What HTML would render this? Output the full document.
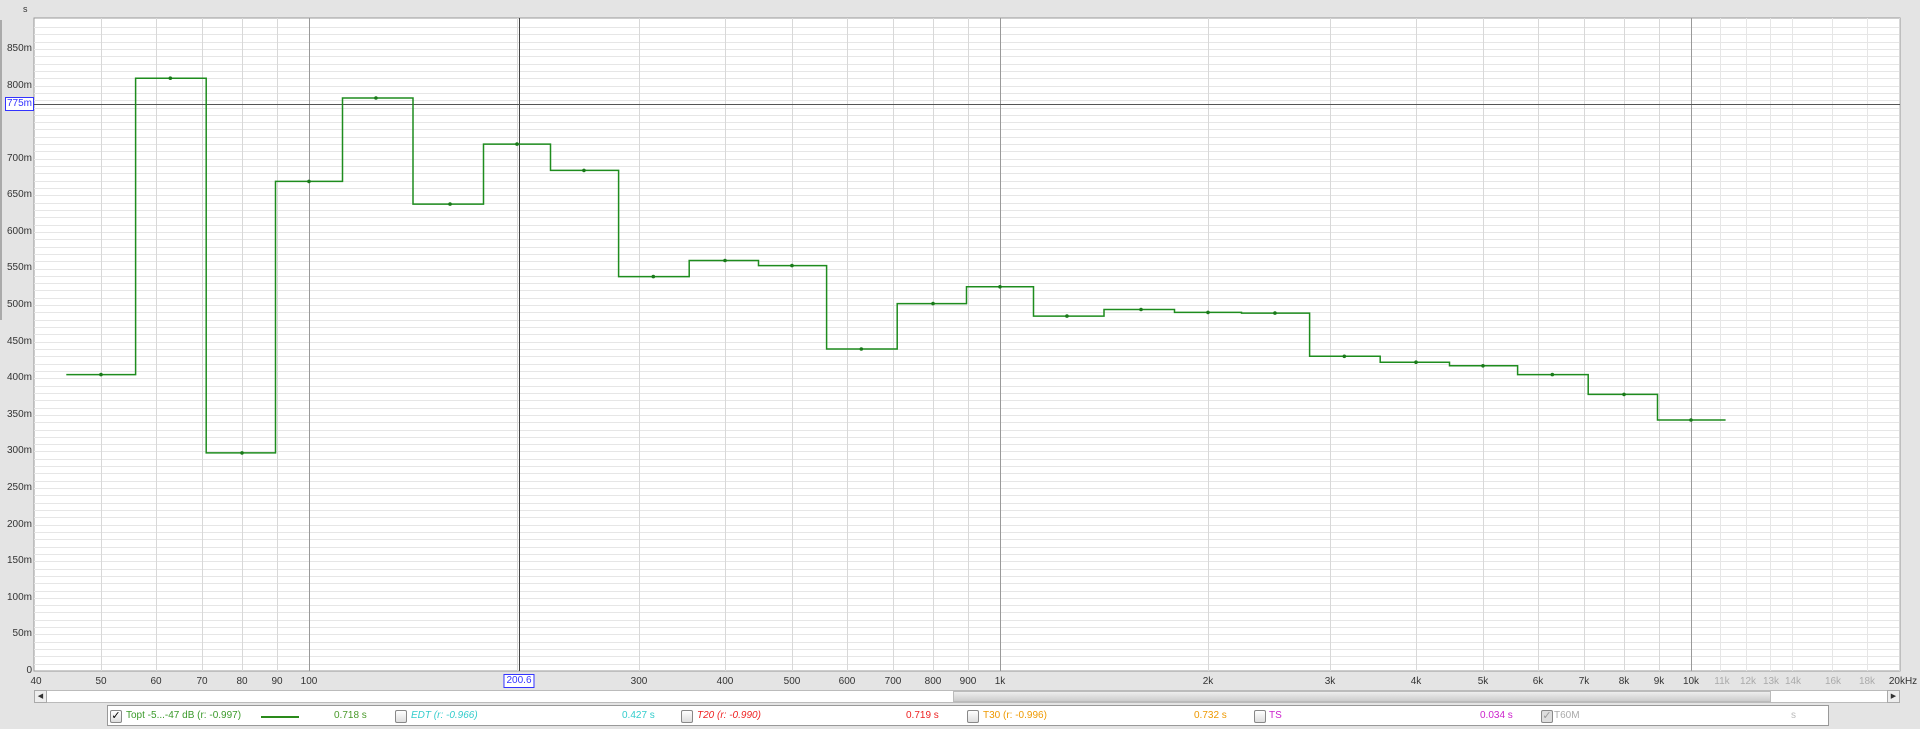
<!DOCTYPE html>
<html><head><meta charset="utf-8"><style>
body{margin:0;width:1920px;height:729px;background:#e4e4e4;font-family:"Liberation Sans",sans-serif;font-size:10px;color:#333;position:relative;overflow:hidden}
.t{position:absolute;white-space:nowrap}
.yl{position:absolute;right:1888px;text-align:right}
.xl{position:absolute;top:676px;transform:translateX(-50%)}
.g{color:#aaa}
.cb{position:absolute;width:10px;height:11px;border:1px solid #888;border-radius:2px;background:linear-gradient(#fff,#ddd);top:710px}
.lg{position:absolute;top:710px;font-size:10px}
</style></head><body>
<div class="t" style="left:23px;top:4px;font-size:9px">s</div>
<div style="position:absolute;left:0;top:20px;width:2px;height:300px;background:#aaa"></div>
<svg id="p" width="1920" height="729" style="position:absolute;left:0;top:0"></svg>
<div class="yl" style="top:43px">850m</div>
<div class="yl" style="top:80px">800m</div>
<div class="yl" style="top:153px">700m</div>
<div class="yl" style="top:189px">650m</div>
<div class="yl" style="top:226px">600m</div>
<div class="yl" style="top:262px">550m</div>
<div class="yl" style="top:299px">500m</div>
<div class="yl" style="top:336px">450m</div>
<div class="yl" style="top:372px">400m</div>
<div class="yl" style="top:409px">350m</div>
<div class="yl" style="top:445px">300m</div>
<div class="yl" style="top:482px">250m</div>
<div class="yl" style="top:519px">200m</div>
<div class="yl" style="top:555px">150m</div>
<div class="yl" style="top:592px">100m</div>
<div class="yl" style="top:628px">50m</div>
<div class="yl" style="top:665px">0</div>
<div class="t" style="left:5px;top:97px;border:1px solid #33f;color:#33f;background:#fff;padding:0 1px;font-size:10px;line-height:12px">775m</div>
<div class="xl" style="left:36px">40</div>
<div class="xl" style="left:101px">50</div>
<div class="xl" style="left:156px">60</div>
<div class="xl" style="left:202px">70</div>
<div class="xl" style="left:242px">80</div>
<div class="xl" style="left:277px">90</div>
<div class="xl" style="left:309px">100</div>
<div class="xl" style="left:519px;top:674px;border:1px solid #33f;color:#33f;background:#fff;padding:0 2px;line-height:12px">200.6</div>
<div class="xl" style="left:639px">300</div>
<div class="xl" style="left:725px">400</div>
<div class="xl" style="left:792px">500</div>
<div class="xl" style="left:847px">600</div>
<div class="xl" style="left:893px">700</div>
<div class="xl" style="left:933px">800</div>
<div class="xl" style="left:968px">900</div>
<div class="xl" style="left:1000px">1k</div>
<div class="xl" style="left:1208px">2k</div>
<div class="xl" style="left:1330px">3k</div>
<div class="xl" style="left:1416px">4k</div>
<div class="xl" style="left:1483px">5k</div>
<div class="xl" style="left:1538px">6k</div>
<div class="xl" style="left:1584px">7k</div>
<div class="xl" style="left:1624px">8k</div>
<div class="xl" style="left:1659px">9k</div>
<div class="xl" style="left:1691px">10k</div>
<div class="xl g" style="left:1722px">11k</div>
<div class="xl g" style="left:1748px">12k</div>
<div class="xl g" style="left:1771px">13k</div>
<div class="xl g" style="left:1793px">14k</div>
<div class="xl g" style="left:1833px">16k</div>
<div class="xl g" style="left:1867px">18k</div>
<div class="xl" style="left:1903px">20kHz</div>
<!-- scrollbar -->
<div style="position:absolute;left:34px;top:690px;width:1866px;height:13px;background:#fff;border:1px solid #bbb;box-sizing:border-box"></div>
<div style="position:absolute;left:34px;top:690px;width:13px;height:13px;border:1px solid #aaa;box-sizing:border-box;background:#eee;font-size:7px;line-height:11px;text-align:center">◀</div>
<div style="position:absolute;left:953px;top:691px;width:818px;height:11px;background:linear-gradient(#eee,#ccc);border:1px solid #bbb;box-sizing:border-box"></div>
<div style="position:absolute;left:1887px;top:690px;width:13px;height:13px;border:1px solid #aaa;box-sizing:border-box;background:#eee;font-size:7px;line-height:11px;text-align:center">▶</div>
<!-- legend -->
<div style="position:absolute;left:107px;top:705px;width:1722px;height:21px;background:#fff;border:1px solid #999;box-sizing:border-box"></div>
<div class="cb" style="left:110px;font-size:11px;line-height:11px;text-align:center;color:#000">✓</div>
<div class="lg" style="left:126px;color:#3a9a2a">Topt -5...-47 dB (r: -0.997)</div>
<div style="position:absolute;left:261px;top:716px;width:38px;height:2px;background:#2a8a1a"></div>
<div class="lg" style="left:334px;color:#4a9a2a">0.718 s</div>
<div class="cb" style="left:395px"></div>
<div class="lg" style="left:411px;color:#3cc;font-style:italic">EDT (r: -0.966)</div>
<div class="lg" style="left:622px;color:#3cc">0.427 s</div>
<div class="cb" style="left:681px"></div>
<div class="lg" style="left:697px;color:#e22;font-style:italic">T20 (r: -0.990)</div>
<div class="lg" style="left:906px;color:#e22">0.719 s</div>
<div class="cb" style="left:967px"></div>
<div class="lg" style="left:983px;color:#e90">T30 (r: -0.996)</div>
<div class="lg" style="left:1194px;color:#e90">0.732 s</div>
<div class="cb" style="left:1254px"></div>
<div class="lg" style="left:1269px;color:#c2c">TS</div>
<div class="lg" style="left:1480px;color:#c2c">0.034 s</div>
<div class="cb" style="left:1541px;background:#ddd;color:#999;font-size:11px;line-height:11px;text-align:center">✓</div>
<div class="lg" style="left:1554px;color:#aaa">T60M</div>
<div class="lg" style="left:1791px;color:#bbb">s</div>
<script>
var s=document.getElementById('p'),h='';
function X(f){return 34+691*Math.log10(f/40)}
function Y(v){return 671-v*0.7318}
h+='<rect x="34" y="18" width="1866" height="653" fill="#fff" stroke="#999"/>';
for(var v=10;v<=880;v+=10){var y=Math.round(Y(v))+0.5;if(y>18)h+='<line x1="34" x2="1900" y1="'+y+'" y2="'+y+'" stroke="#e6e6e6"/>';}
var fs=[];for(var d=10;d<=10000;d*=10)for(var k=1;k<10;k++)fs.push(k*d);
fs.forEach(function(f){if(f>40&&f<=20000){var x=Math.round(X(f))+0.5;var dk=(f==100||f==1000||f==10000);h+='<line x1="'+x+'" x2="'+x+'" y1="18" y2="671" stroke="'+(dk?'#999':'#d8d8d8')+'"/>';}});
[11000,12000,13000,14000,16000,18000].forEach(function(f){var x=Math.round(X(f))+0.5;h+='<line x1="'+x+'" x2="'+x+'" y1="18" y2="671" stroke="#e6e6e6"/>';});
h+='<line x1="519.5" x2="519.5" y1="18" y2="671" stroke="#444"/>';
var yc=Math.round(Y(775))+0.5;
h+='<line x1="34" x2="1900" y1="'+yc+'" y2="'+yc+'" stroke="#555"/>';
var c=[50,63,80,100,125,160,200,250,315,400,500,630,800,1000,1250,1600,2000,2500,3150,4000,5000,6300,8000,10000];
var v=[405,810,298,669,783,638,720,684,539,561,554,440,502,525,485,494,490,489,430,422,417,405,378,343];
var r=Math.pow(2,1/6),p='',dots='';
var ed=[c[0]/r];for(var i=0;i<c.length-1;i++)ed.push(Math.sqrt(c[i]*c[i+1]));ed.push(c[c.length-1]*r);
c.forEach(function(f,i){var a=X(ed[i]).toFixed(1),b=X(ed[i+1]).toFixed(1),y=Y(v[i]).toFixed(1);p+=(i?'L':'M')+a+' '+y+'L'+b+' '+y;dots+='<circle cx="'+X(f)+'" cy="'+y+'" r="1.8" fill="#1a7a1a"/>';});
h+='<path d="'+p+'" fill="none" stroke="#1e8c1e" stroke-width="1.5"/>'+dots;
s.innerHTML=h;
</script>
</body></html>
